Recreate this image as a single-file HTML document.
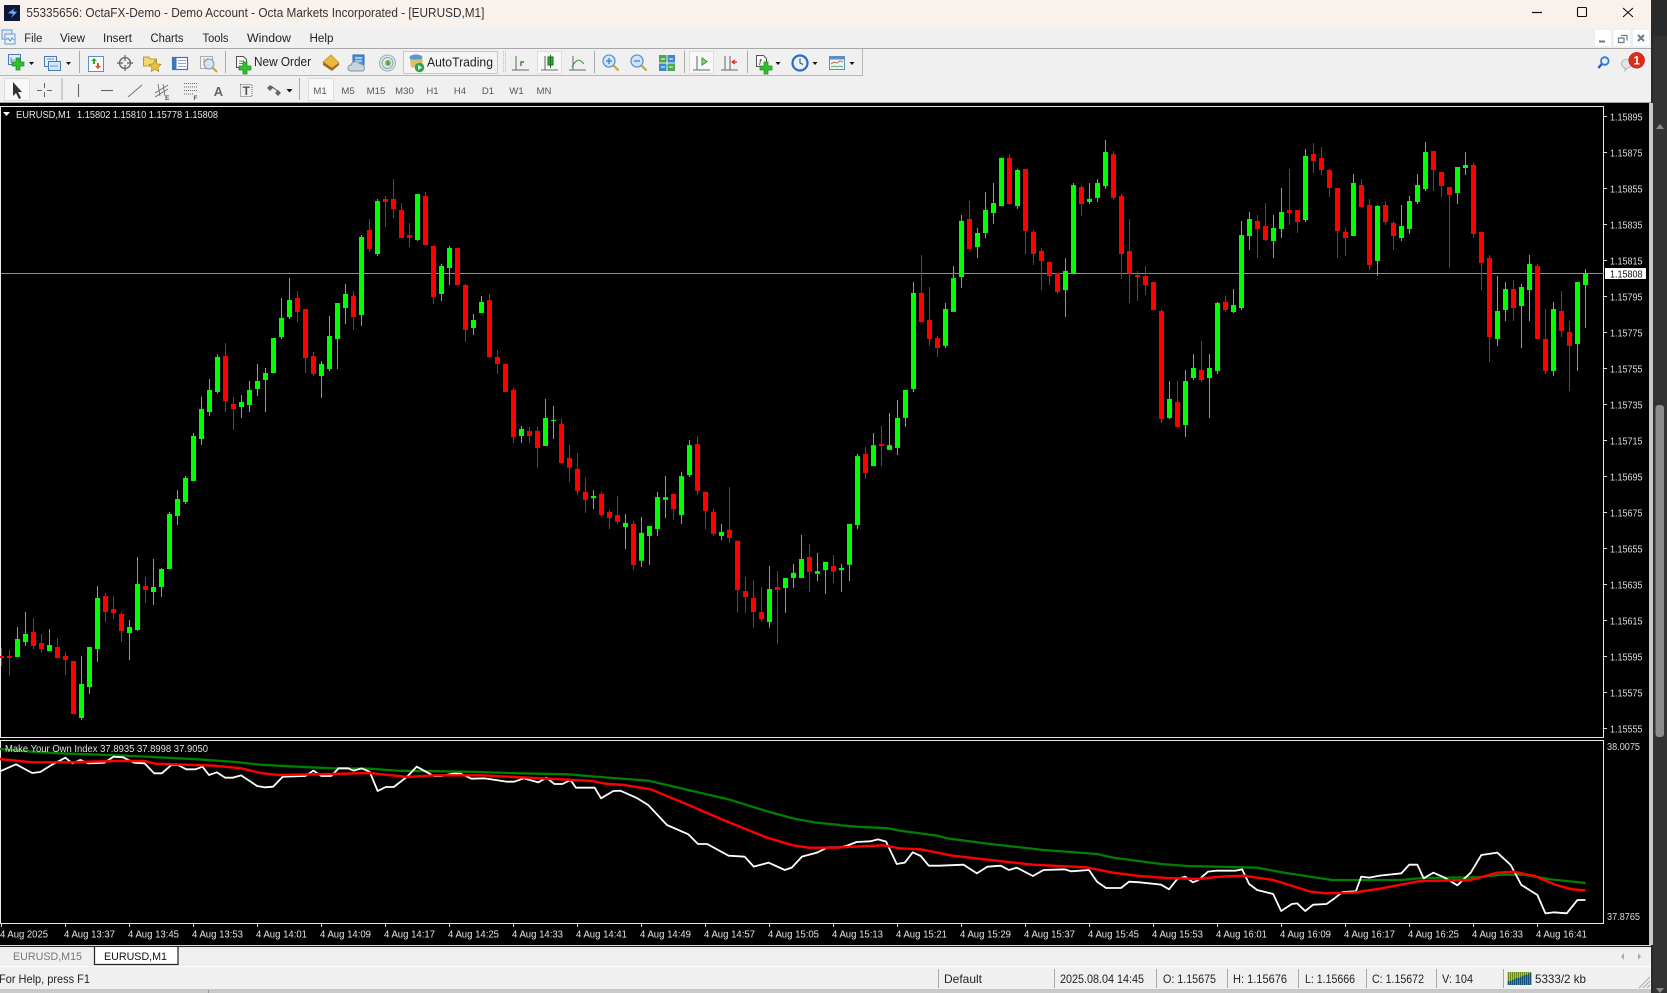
<!DOCTYPE html>
<html><head><meta charset="utf-8"><title>55335656: OctaFX-Demo - Demo Account - Octa Markets Incorporated - [EURUSD,M1]</title>
<style>
html,body{margin:0;padding:0;background:#2a2a2a;width:1667px;height:993px;overflow:hidden}
svg{display:block;font-family:"Liberation Sans",sans-serif}
.m{font-size:12.2px;fill:#222}
.tf{font-size:9.6px;fill:#555;text-anchor:middle}
.p{font-size:10px;fill:#dcdcdc}
.t{font-size:10.4px;fill:#e4e4e4}
.s{font-size:11.7px;fill:#222}
.c{fill:none;shape-rendering:crispEdges}
.r{stroke:#f00}.g{stroke:#0f0}
.w{stroke-width:.125}.b{stroke-width:.625}
.i{fill:none;vector-effect:non-scaling-stroke;stroke-linejoin:round}
.ic{fill:none;stroke:#555;stroke-width:1}
.sep{stroke:#a8a8a8;stroke-width:1;shape-rendering:crispEdges}
</style></head><body>
<svg width="1667" height="993" viewBox="0 0 1667 993" xmlns="http://www.w3.org/2000/svg">
<!-- background panels -->
<rect width="1667" height="993" fill="#2a2a2a"/>
<rect x="1653" y="36" width="14" height="957" fill="#333"/>
<rect x="0" y="0" width="1651" height="28" fill="#f8f1ec"/>
<rect x="0" y="28" width="1651" height="75" fill="#f0f0f0"/>
<rect x="0" y="48" width="1651" height="1" fill="#a8a8a8"/>
<rect x="0" y="75" width="862" height="1" fill="#b8b8b8"/>
<rect x="862" y="49" width="1" height="27" fill="#b8b8b8"/>
<rect x="0" y="102" width="1651" height="1" fill="#a0a0a0"/>
<rect x="0" y="103" width="1650" height="842" fill="#000"/>
<rect x="1649" y="103" width="4" height="842" fill="#c8c8c8"/>
<!-- title bar -->
<rect x="4" y="5" width="16" height="16" fill="#10183a"/>
<path d="M15 8L8 13l5 1-2 4 6-6-4-1z" fill="#6ea8f0"/>
<text x="26.4" y="17" font-size="13.2" fill="#333" textLength="458" lengthAdjust="spacingAndGlyphs">55335656: OctaFX-Demo - Demo Account - Octa Markets Incorporated - [EURUSD,M1]</text>
<path d="M1532 12.5h10" stroke="#111" stroke-width="1.2"/>
<rect x="1577.5" y="7.5" width="9" height="9" rx="1" fill="none" stroke="#111" stroke-width="1.1"/>
<path d="M1623 8l10 9M1633 8l-10 9" stroke="#111" stroke-width="1.1"/>
<!-- menu -->
<rect x="2" y="30" width="10" height="9" fill="#dbe8f8" stroke="#6a9ad0"/>
<rect x="5" y="34" width="10" height="10" fill="#e8f1fb" stroke="#6a9ad0"/>
<path d="M6 40l2-2 2 3 2-3 2 2" fill="none" stroke="#4a7ab0" stroke-width=".8"/>
<text class="m" x="24.3" y="42" textLength="18" lengthAdjust="spacingAndGlyphs">File</text>
<text class="m" x="60" y="42" textLength="25" lengthAdjust="spacingAndGlyphs">View</text>
<text class="m" x="103" y="42" textLength="29" lengthAdjust="spacingAndGlyphs">Insert</text>
<text class="m" x="150.5" y="42" textLength="33" lengthAdjust="spacingAndGlyphs">Charts</text>
<text class="m" x="202.5" y="42" textLength="26" lengthAdjust="spacingAndGlyphs">Tools</text>
<text class="m" x="247" y="42" textLength="44" lengthAdjust="spacingAndGlyphs">Window</text>
<text class="m" x="309.5" y="42" textLength="24" lengthAdjust="spacingAndGlyphs">Help</text>
<rect x="1595" y="30" width="16" height="16" fill="#fff"/><rect x="1614" y="30" width="16" height="16" fill="#fff"/><rect x="1633" y="30" width="16" height="16" fill="#fff"/>
<path d="M1599 41.5h6" stroke="#6a7a8a" stroke-width="2"/>
<path d="M1621 35.5h6v5M1618.5 38h5.500v4.500h-5.500z" fill="none" stroke="#6a7a8a" stroke-width="1.200"/>
<path d="M1638 35l6 6M1644 35l-6 6" stroke="#6a7a8a" stroke-width="2"/>
<!-- toolbar 1 -->
<g>
<rect x="8.500" y="54.500" width="12" height="10" fill="#e4eef9" stroke="#4a7ab8"/>
<path d="M11 57v5h6M11 60h4" stroke="#4a7ab8" fill="none" stroke-width=".8"/>
<path d="M16 58h4v4h4v4h-4v4h-4v-4h-4v-4h4z" fill="#30c030" stroke="#1c8a1c" stroke-width=".7"/>
<path d="M29 62h5l-2.500 3z" fill="#111"/>
<rect x="44.500" y="56.500" width="12" height="10" fill="#e4eef9" stroke="#4a7ab8"/>
<rect x="48.500" y="61.500" width="12" height="9" fill="#d6e6f7" stroke="#4a7ab8"/>
<path d="M47 59h7M50 66h8" stroke="#4a7ab8" stroke-width=".8"/>
<path d="M66 62h5l-2.500 3z" fill="#111"/>
<path class="sep" d="M79.500 51v22"/>
<rect x="88.500" y="56.500" width="15" height="15" fill="#fdfdfd" stroke="#5a90c8"/>
<path d="M94 58l3 3h-2v3h-2v-3h-2z" fill="#2ca82c"/><path d="M98 69l-3-3h2v-3h2v3h2z" fill="#e05030"/>
<circle cx="125" cy="63" r="5.500" fill="#e8e8e8" stroke="#666" stroke-width="1.300"/>
<path d="M125 55v16M117 63h16" stroke="#666" stroke-width="1.200"/><circle cx="125" cy="63" r="2" fill="#f0f0f0"/>
<path d="M143.500 66v-9h5l2 2h6v7z" fill="#f6d870" stroke="#b89838"/>
<path d="M155 60l1.900 3.900 4.100.500-3 3 .8 4.100-3.800-2.100-3.800 2.100.800-4.100-3-3 4.100-.500z" fill="#eec040" stroke="#a88828" stroke-width=".7"/>
<rect x="172.500" y="57.500" width="15" height="12" fill="#fff" stroke="#3a78b8" stroke-width="1.200"/>
<rect x="172.500" y="57.500" width="4" height="12" fill="#3a78b8"/>
<path d="M178 60.500h8M178 63.500h8M178 66.500h8" stroke="#6a8ab0" stroke-width=".8"/>
<rect x="200.500" y="56.500" width="12" height="12" fill="#f4f4f4" stroke="#aaa"/>
<path d="M204 58v7h7M207 58v4" stroke="#888" fill="none" stroke-width=".8"/>
<circle cx="209" cy="64" r="5" fill="#cfe4f6" fill-opacity=".8" stroke="#8898a8"/>
<path d="M213 68l4 4" stroke="#c8a040" stroke-width="2"/>
<path class="sep" d="M225.500 51v22"/>
<path d="M236.500 56.500h7l3 3v8h-10z" fill="#f8f8f8" stroke="#555"/><path d="M239 61h5M239 63.500h5" stroke="#555" stroke-width=".8"/>
<path d="M243 62h4v4h4v4h-4v4h-4v-4h-4v-4h4z" fill="#30c030" stroke="#1c8a1c" stroke-width=".7"/>
<text x="254" y="66" font-size="12.600" fill="#222" textLength="57" lengthAdjust="spacingAndGlyphs">New Order</text>
<path d="M323 62l8-7 8 8-7 5z" fill="#eab93a" stroke="#b88a20" stroke-width=".7"/><path d="M323 62l9 6 7-5v2l-7 6-9-6z" fill="#9a6a28"/>
<path d="M353 55h11v10h-11z" fill="#4a90d8" stroke="#2a68b0"/><path d="M355 58h7M355 61h7" stroke="#fff"/>
<path d="M351 71a3 3 0 010-6 5 5 0 019-1 4 4 0 013 7z" fill="#c8d4e2" stroke="#8494a8"/>
<circle cx="387.500" cy="63" r="8" fill="#dfe8ee" stroke="#9ab0b8"/><circle cx="387.500" cy="63" r="5.500" fill="none" stroke="#8aa8b0"/><circle cx="388" cy="63" r="3" fill="#8ab860"/><path d="M388 61v4" stroke="#2a7a30"/>
<rect x="403.500" y="51.500" width="94" height="22" fill="#f4f4f4" stroke="#c8c8c8"/>
<ellipse cx="416" cy="57.500" rx="6.500" ry="3" fill="#5a98d0"/><path d="M410 59.500h13l-1 8h-11z" fill="#d8c070"/><circle cx="419.500" cy="67.500" r="4.700" fill="#27a84a"/><path d="M418 65v5l4-2.500z" fill="#fff"/>
<text x="427" y="66.300" font-size="12.600" fill="#222" textLength="66" lengthAdjust="spacingAndGlyphs">AutoTrading</text>
<path d="M503.500 51v22" stroke="#bbb" stroke-dasharray="1 1"/><path d="M505.500 51v22" stroke="#bbb" stroke-dasharray="1 1"/>
<path d="M516 56v14M512 70h17" stroke="#666" fill="none"/><path d="M521 66v-4h3" stroke="#2a8a2a" fill="none" stroke-width="1.400"/>
<rect x="537.500" y="51.500" width="24" height="22" fill="#f8f8f8" stroke="#ddd"/>
<path d="M545 56v14M541 70h17" stroke="#666" fill="none"/><rect x="548" y="57" width="5" height="8" fill="#2ab52a" stroke="#176e17"/><path d="M550.500 55v13" stroke="#176e17"/>
<path d="M573 56v14M569 70h17" stroke="#666" fill="none"/><path d="M572 67c3-6 6-8 9-6l3 3" stroke="#3a9a3a" fill="none" stroke-width="1.100"/>
<path class="sep" d="M594.500 51v22"/>
<circle cx="609" cy="61" r="6" fill="#cfe4f8" stroke="#5a98d0" stroke-width="1.300"/><path d="M606 61h6M609 58v6" stroke="#3a78c0" stroke-width="1.200"/><path d="M613.500 65.500l5 5" stroke="#d0a840" stroke-width="2.400"/>
<circle cx="637" cy="61" r="6" fill="#cfe4f8" stroke="#5a98d0" stroke-width="1.300"/><path d="M634 61h6" stroke="#3a78c0" stroke-width="1.200"/><path d="M641.500 65.500l5 5" stroke="#d0a840" stroke-width="2.400"/>
<rect x="659" y="55" width="7.500" height="7.500" fill="#4ca84c"/><rect x="667.500" y="55" width="7.500" height="7.500" fill="#3a88d8"/><rect x="659" y="63.500" width="7.500" height="7.500" fill="#3a88d8"/><rect x="667.500" y="63.500" width="7.500" height="7.500" fill="#4ca84c"/>
<path d="M661 59h4M669 59h4M661 67h4M669 67h4" stroke="#fff"/>
<path class="sep" d="M684.500 51v22"/>
<rect x="689.500" y="51.500" width="24" height="22" fill="#f8f8f8" stroke="#ddd"/>
<path d="M697 56v14M693 70h17" stroke="#666" fill="none"/><path d="M702 58v7l5-3.500z" fill="#8ed88e" stroke="#2a9a2a"/>
<path d="M725 56v14M721 70h17M730 56v14" stroke="#666" fill="none"/><path d="M737 62h-4m2-2l-3 2 3 2" stroke="#d83020" fill="none" stroke-width="1.200"/>
<path class="sep" d="M747.500 51v22"/>
<path d="M756.500 55.500h7l3 3v8h-10z" fill="#f8f8f8" stroke="#555"/><text x="759" y="65" font-size="8" fill="#333" font-style="italic">f</text>
<path d="M764 62h4v4h4v4h-4v4h-4v-4h-4v-4h4z" fill="#30c030" stroke="#1c8a1c" stroke-width=".7"/>
<path d="M775.500 62h5l-2.500 3z" fill="#111"/>
<circle cx="800" cy="63" r="7.500" fill="#e8f0f8" stroke="#2a6fc0" stroke-width="2.200"/><path d="M800 58.500v4.500l3 1.500" stroke="#444" fill="none"/>
<path d="M812.500 62h5l-2.500 3z" fill="#111"/>
<rect x="829.500" y="56.500" width="15" height="13" fill="#eef4fb" stroke="#5a90c8"/><rect x="829.500" y="56.500" width="15" height="3" fill="#5a90c8"/><path d="M831 64l3-2 3 1 3-2 3 1" stroke="#d05030" fill="none" stroke-width=".8"/><path d="M831 67l3-1 3 1 3-1 3 1" stroke="#3a9a3a" fill="none" stroke-width=".8"/>
<path d="M849.500 62h5l-2.500 3z" fill="#111"/>
<!-- search + chat -->
<circle cx="1604.800" cy="61" r="3.800" fill="#e8f2fc" stroke="#3a78d0" stroke-width="1.800"/><path d="M1601.800 64l-3.500 4" stroke="#2a60c0" stroke-width="2.400"/>
<path d="M1624 60a5 5 0 015 0c4 1 3 8-2 8l-2 3v-3c-4-1-5-6-1-8z" fill="#e4e4e4" stroke="#b8b8b8"/>
<circle cx="1636.700" cy="60.300" r="8" fill="#e02a1a"/><circle cx="1636.700" cy="60.300" r="8" fill="none" stroke="#b82010" stroke-width=".5"/>
<text x="1636.700" y="64.500" font-size="11.500" font-weight="bold" fill="#fff" text-anchor="middle">1</text>
</g>
<!-- toolbar 2 -->
<g>
<rect x="4.500" y="78.500" width="25" height="22" fill="#f8f8f8" stroke="#ddd"/>
<path d="M13 82v14l3-3 3 6 2-1-3-6h4z" fill="#333"/>
<path d="M44.500 83v5M44.500 92v5M37 90.500h5M47 90.500h5" stroke="#666"/>
<path class="sep" d="M62 78v22"/>
<path d="M78.500 84v13" stroke="#666" stroke-width="1.100"/>
<path d="M101 90.500h12" stroke="#666" stroke-width="1.100"/>
<path d="M128 97l14-12" stroke="#777" stroke-width="1.100"/>
<path d="M155 93l13-8M155 97l13-8M158 84l2 12M163 84l2 12" stroke="#666" fill="none" stroke-width=".8"/>
<text x="165" y="100" font-size="6.500" font-weight="bold" fill="#555">E</text>
<path d="M184 83.500h13M184 87h13M184 90.500h13M184 94h9" stroke="#666" stroke-dasharray="1 1"/>
<text x="193.500" y="100" font-size="6.500" font-weight="bold" fill="#555">F</text>
<text x="218.500" y="96" font-size="13" font-weight="bold" fill="#666" text-anchor="middle">A</text>
<rect x="240.500" y="84.500" width="11.500" height="12" fill="none" stroke="#666" stroke-dasharray="1 1"/>
<text x="246.300" y="95" font-size="12" font-weight="bold" fill="#555" text-anchor="middle">T</text>
<path d="M270 85l3 3-3 3-3-3z" fill="#666"/><path d="M278 90l3 3-3 3-3-3z" fill="#666"/><path d="M271 86l8 6" stroke="#555"/>
<path d="M286.500 89h6l-3 3.500z" fill="#111"/>
<path class="sep" d="M299.500 78v22"/>
<rect x="308.500" y="78.500" width="25" height="22" fill="#f8f8f8" stroke="#ddd"/>
<text class="tf" x="320" y="94">M1</text><text class="tf" x="348" y="94">M5</text><text class="tf" x="376" y="94">M15</text><text class="tf" x="404.500" y="94">M30</text><text class="tf" x="432.500" y="94">H1</text><text class="tf" x="460" y="94">H4</text><text class="tf" x="488" y="94">D1</text><text class="tf" x="516.500" y="94">W1</text><text class="tf" x="544" y="94">MN</text>
</g>

<!-- chart frames -->
<g fill="#e8e8e8" shape-rendering="crispEdges">
<rect x="0" y="106" width="1604" height="1"/>
<rect x="0" y="106" width="1" height="632"/>
<rect x="1603" y="106" width="1" height="632"/>
<rect x="0" y="737" width="1604" height="1"/>
<rect x="0" y="740" width="1604" height="1"/>
<rect x="0" y="740" width="1" height="184"/>
<rect x="1603" y="740" width="1" height="184"/>
<rect x="0" y="923" width="1604" height="1"/>
</g>
<!-- price line -->
<rect x="1" y="273" width="1603" height="1" fill="#8a9096"/>

<!-- candles group A -->
<g transform="translate(1.5,400) scale(8,.33333)">
<path class="c r w" d="M0 744V798M1 750V828M4 654V747M5 702V759M7 714V774M8 756V825M13 579V666M14 588V657M15 636V726M18 531V609M28-171V36M29-9V90M37-327V-234M38-273V-81M39-144V-72M44-327V-210M46-543V-444M48-612V-519M49-663V-546M50-591V-486M51-531V-459M53-624V-465M54-462V-288M58-348V-174M61-318V-126M62-150V-78M63-111V-24M64-36V129M66 81V129M67 81V204"/>
<path class="c r b" d="M0 768V774M1 768V774M4 696V738M5 729V747M7 741V774M8 768V780M9 783V942M13 588V636M14 627V639M15 642V693M18 558V570M28-132V4M29 12V27M37-306V-264M38-273V-126M39-132V-78M44-312V-249M46-510V-453M48-603V-594M49-603V-573M50-570V-486M51-495V-486M53-612V-465M54-462V-309M57-456V-345M58-345V-210M61-300V-129M62-129V-108M63-108V-24M64-30V111M66 93V108M67 93V144"/>
<path class="c g w" d="M2 681V771M3 636V738M6 687V753M10 768V960M11 741V882M12 558V786M16 660V780M17 471V693M19 477V615M20 504V591M21 336V507M22 270V375M23 228V312M24 99V243M25-10V135M26-63V48M27-137V-20M30-15V54M31-57V36M32-108V-12M33-96V36M35-306V-183M36-366V-243M40-117V-6M41-252V-87M42-291V-93M43-348V-228M45-495V-222M47-603V-432M52-618V-477M55-408V-297M56-462V-345M59-258V-195M60-312V-261M65 78V129M68-3V138M69 18V117"/>
<path class="c g b" d="M2 717V771M3 702V726M6 735V753M10 852V954M11 741V861M12 594V747M16 681V699M17 552V690M19 561V576M20 507V561M21 342V507M22 297V348M23 234V306M24 108V243M25 27V117M26-30V36M27-129V-24M30 6V21M31-30V15M32-57V-33M33-81V-60M34-186V-81M35-246V-189M36-300V-249M40-108V-72M41-192V-93M42-291V-183M43-318V-276M45-489V-255M47-597V-438M52-618V-480M55-402V-318M56-456V-396M59-240V-216M60-294V-261M65 87V108M68 54V138M69 60V63"/>
</g>
<!-- candles group B -->
<g transform="translate(1.5,130) scale(8,.34435)">
<path class="c r w" d="M70 837V967M71 915V1022M72 938V1060M73 1010V1112M75 1051V1121M76 1103V1159M77 1063V1144M79 1135V1278M84 1057V1132M87 889V1060M88 1051V1159M89 1098V1179M91 1037V1199M92 1193V1402M93 1298V1402M94 1307V1445M95 1327V1428M97 1281V1493M101 1202V1342M104 1234V1315M108 921V1013M110 859V976M115 363V558M116 456V627M117 598V659M121 206V346M126 70V215M128 113V360M129 290V392M130 343V465M131 383V450M132 415V476M135 160V250M139 61V203"/>
<path class="c r b" d="M70 854V967M71 952V981M72 984V1048M73 1051V1074M75 1057V1118M76 1109V1127M77 1118V1138M79 1144V1263M84 1057V1101M87 912V1048M88 1051V1106M89 1109V1173M91 1161V1185M92 1193V1336M93 1339V1356M94 1359V1400M95 1400V1420M97 1327V1336M101 1240V1283M104 1266V1283M108 941V996M110 912V918M115 473V558M116 552V607M117 604V633M121 258V346M126 81V215M128 113V293M129 296V360M130 351V380M131 383V424M132 415V470M135 166V215M139 70V197"/>
<path class="c g w" d="M74 1045V1101M78 1115V1217M80 1124V1269M81 1150V1263M82 1051V1179M83 1005V1127M85 993V1144M86 900V1008M90 1144V1191M96 1266V1445M98 1301V1402M99 1260V1330M100 1176V1301M102 1228V1310M103 1254V1347M105 1260V1342M106 1144V1310M107 941V1159M109 880V976M111 822V929M112 784V944M113 755V862M114 441V761M118 502V633M119 395V528M120 247V459M122 285V372M123 180V314M124 154V273M125 81V221M127 113V229M133 372V543M134 154V417M136 154V215M137 142V209M138 29V171"/>
<path class="c g b" d="M74 1063V1069M78 1141V1153M80 1170V1251M81 1150V1179M82 1066V1159M83 1066V1074M85 1005V1118M86 915V1002M90 1167V1179M96 1333V1429M98 1301V1330M99 1286V1301M100 1246V1301M102 1281V1289M103 1254V1278M105 1272V1278M106 1144V1263M107 947V1147M109 915V976M111 915V929M112 836V923M113 755V836M114 473V752M118 520V627M119 430V528M120 264V427M122 299V340M123 232V299M124 212V241M125 81V221M127 116V221M133 409V465M134 160V417M136 200V209M137 154V197M138 64V163"/>
</g>
<!-- candles group C -->
<g transform="translate(1.5,130) scale(8,.33333)">
<path class="c r w" d="M140 192V447M141 267V519M142 423V513M143 408V495M144 456V540M145 537V879M147 753V891M150 633V756M153 498V546M157 255V384M158 219V333M161 117V285M162 240V309M164 39V129M165 51V135M166 117V201M167 174V384M168 294V378M170 147V231M171 207V420M173 213V285M174 273V360M179 63V183M180 126V201M181 171V414M184 99V324M185 306V480M186 375V696M189 450V573M192 402V627M193 537V732M195 483V621M196 573V783"/>
<path class="c r b" d="M140 198V372M141 363V431M142 435V441M143 438V465M144 456V540M145 543V867M147 816V891M150 720V750M153 516V540M157 273V297M158 288V330M161 240V249M162 240V276M164 72V93M165 84V120M166 120V174M167 174V303M168 306V324M170 165V231M171 225V405M173 225V276M174 279V318M179 63V120M180 126V168M181 171V195M184 105V312M185 306V399M186 384V621M189 477V534M192 408V627M193 627V723M195 543V603M196 606V648"/>
<path class="c g w" d="M146 753V867M148 720V921M149 672V750M151 672V864M152 516V732M154 477V549M155 273V540M156 246V360M159 255V384M160 174V324M163 57V276M169 132V318M172 225V438M175 225V333M176 198V312M177 132V222M178 36V183M182 111V222M183 66V135M187 438V648M188 456V573M190 462V654M191 375V573M194 516V738M197 456V723M198 417V594"/>
<path class="c g b" d="M146 807V864M148 753V885M149 714V744M151 714V744M152 519V723M154 525V546M155 315V534M156 267V318M159 294V333M160 246V297M163 78V270M169 159V318M172 228V393M175 288V324M176 213V297M177 165V216M178 66V177M182 111V189M183 105V114M187 543V627M188 477V540M190 471V528M191 402V480M194 537V723M197 456V642M198 430V465"/>
</g>

<!-- indicator -->
<g transform="translate(0,730) scale(.5357,.33333)">
<polyline class="i" stroke="#007f00" stroke-width="2.300" points="0,57 60,65 110,70 165,73 250,78 310,83 370,88 440,96 485,104 540,109 620,115 690,116 740,122 870,125 970,130 1060,133 1120,141 1210,152 1280,178 1360,208 1430,243 1480,265 1520,277 1568,285"/>
<polyline class="i" stroke="#fff" stroke-width="1.800" points="0,124 30,103 60,129 75,126 95,106 122,83 135,100 150,90 165,100 195,98 212,80 230,82 250,98 270,100 288,130 302,130 320,105 332,105 348,118 365,118 378,110 390,135 405,127 420,143 435,143 450,136 480,168 495,172 510,170 528,140 570,138 585,122 600,138 618,138 632,115 650,115 660,122 675,115 690,125 705,183 720,171 735,171 760,140 778,110 795,125 810,138 825,138 845,131 860,131 880,146 905,145 945,155 960,155 978,145 1005,157 1020,143 1035,162 1050,162 1065,150 1075,173 1110,173 1122,205 1145,183 1158,182 1190,205 1210,225 1245,285 1285,313 1303,342 1320,342 1360,377 1390,380 1407,410 1435,398 1465,420 1478,413 1497,380 1525,368 1545,352 1568,352"/>
<polyline class="i" stroke="#f00" stroke-width="2.400" points="0,87 60,97 130,97 210,93 270,93 290,101 400,107 450,115 490,130 520,135 640,131 690,129 760,141 810,136 900,136 960,141 1060,149 1105,153 1130,161 1165,165 1215,178 1290,228 1350,270 1430,322 1480,346 1510,353 1568,353"/>
</g>
<g transform="translate(840,730) translate(-10,0) scale(.5339,.33333)">
<polyline class="i" stroke="#007f00" stroke-width="2.300" points="19,286 50,290 110,295 130,302 200,317 220,325 300,342 400,360 500,372 530,383 620,402 670,408 800,413 850,428 940,450 1070,450 1110,444 1210,442 1260,434 1300,434 1350,448 1415,459"/>
<polyline class="i" stroke="#fff" stroke-width="1.800" points="19,352 30,348 50,336 75,334 90,328 105,335 125,402 140,398 155,367 170,378 185,407 205,407 250,404 275,430 295,410 320,407 335,420 350,413 380,438 400,420 440,418 452,424 485,420 500,455 517,474 545,474 560,455 580,457 620,464 635,478 650,448 665,440 680,457 690,450 708,425 725,422 760,422 772,418 785,462 800,480 830,492 845,543 865,522 875,520 890,543 905,524 930,522 945,505 960,486 985,484 995,440 1010,443 1030,437 1070,430 1085,404 1100,404 1112,445 1130,428 1150,442 1175,466 1200,428 1220,375 1250,368 1275,405 1295,465 1325,495 1340,550 1355,547 1380,550 1400,510 1415,510"/>
<polyline class="i" stroke="#f00" stroke-width="2.400" points="19,352 100,346 130,355 170,358 230,377 300,390 380,404 480,412 530,428 580,438 630,444 690,447 730,440 775,437 830,450 900,485 930,490 980,488 1030,476 1105,453 1200,450 1250,428 1280,425 1320,438 1360,465 1390,478 1415,481"/>
</g>

<!-- chart labels -->
<path d="M3 112h7l-3.500 4z" fill="#fff"/>
<text x="16" y="118" font-size="10.400" fill="#e8e8e8" textLength="55" lengthAdjust="spacingAndGlyphs">EURUSD,M1</text>
<text x="77" y="118" font-size="10.400" fill="#e8e8e8" textLength="141" lengthAdjust="spacingAndGlyphs">1.15802 1.15810 1.15778 1.15808</text>
<text x="5" y="752" font-size="10.400" fill="#e0e0e0" textLength="203" lengthAdjust="spacingAndGlyphs">Make Your Own Index 37.8935 37.8998 37.9050</text>

<!-- price axis -->
<g stroke="#ddd" shape-rendering="crispEdges"><path d="M1604 116.500h3M1604 152.500h3M1604 188.500h3M1604 224.500h3M1604 260.500h3M1604 296.500h3M1604 332.500h3M1604 368.500h3M1604 404.500h3M1604 440.500h3M1604 476.500h3M1604 512.500h3M1604 548.500h3M1604 584.500h3M1604 620.500h3M1604 656.500h3M1604 692.500h3M1604 728.500h3"/></g>
<g lengthAdjust="spacingAndGlyphs">
<text class="p" x="1610" y="120.300" textLength="32.500" lengthAdjust="spacingAndGlyphs">1.15895</text><text class="p" x="1610" y="156.300" textLength="32.500" lengthAdjust="spacingAndGlyphs">1.15875</text><text class="p" x="1610" y="192.300" textLength="32.500" lengthAdjust="spacingAndGlyphs">1.15855</text><text class="p" x="1610" y="228.300" textLength="32.500" lengthAdjust="spacingAndGlyphs">1.15835</text><text class="p" x="1610" y="264.300" textLength="32.500" lengthAdjust="spacingAndGlyphs">1.15815</text><text class="p" x="1610" y="300.300" textLength="32.500" lengthAdjust="spacingAndGlyphs">1.15795</text><text class="p" x="1610" y="336.300" textLength="32.500" lengthAdjust="spacingAndGlyphs">1.15775</text><text class="p" x="1610" y="372.300" textLength="32.500" lengthAdjust="spacingAndGlyphs">1.15755</text><text class="p" x="1610" y="408.300" textLength="32.500" lengthAdjust="spacingAndGlyphs">1.15735</text><text class="p" x="1610" y="444.300" textLength="32.500" lengthAdjust="spacingAndGlyphs">1.15715</text><text class="p" x="1610" y="480.300" textLength="32.500" lengthAdjust="spacingAndGlyphs">1.15695</text><text class="p" x="1610" y="516.300" textLength="32.500" lengthAdjust="spacingAndGlyphs">1.15675</text><text class="p" x="1610" y="552.300" textLength="32.500" lengthAdjust="spacingAndGlyphs">1.15655</text><text class="p" x="1610" y="588.300" textLength="32.500" lengthAdjust="spacingAndGlyphs">1.15635</text><text class="p" x="1610" y="624.300" textLength="32.500" lengthAdjust="spacingAndGlyphs">1.15615</text><text class="p" x="1610" y="660.300" textLength="32.500" lengthAdjust="spacingAndGlyphs">1.15595</text><text class="p" x="1610" y="696.300" textLength="32.500" lengthAdjust="spacingAndGlyphs">1.15575</text><text class="p" x="1610" y="732.300" textLength="32.500" lengthAdjust="spacingAndGlyphs">1.15555</text>
</g>
<rect x="1605" y="268" width="41" height="11" fill="#fff"/>
<text x="1610" y="277.300" font-size="10" fill="#111" textLength="32.500" lengthAdjust="spacingAndGlyphs">1.15808</text>
<text class="p" x="1607" y="750" textLength="33" lengthAdjust="spacingAndGlyphs">38.0075</text>
<text class="p" x="1607" y="920" textLength="33" lengthAdjust="spacingAndGlyphs">37.8765</text>

<!-- time axis -->
<path d="M1.500 923v4M65.500 923v4M129.500 923v4M193.500 923v4M257.500 923v4M321.500 923v4M385.500 923v4M449.500 923v4M513.500 923v4M577.500 923v4M641.500 923v4M705.500 923v4M769.500 923v4M833.500 923v4M897.500 923v4M961.500 923v4M1025.500 923v4M1089.500 923v4M1153.500 923v4M1217.500 923v4M1281.500 923v4M1345.500 923v4M1409.500 923v4M1473.500 923v4M1537.500 923v4" stroke="#ddd" shape-rendering="crispEdges"/>
<text class="t" x="0" y="937.500" textLength="48" lengthAdjust="spacingAndGlyphs">4 Aug 2025</text><text class="t" x="64" y="937.500" textLength="51" lengthAdjust="spacingAndGlyphs">4 Aug 13:37</text><text class="t" x="128" y="937.500" textLength="51" lengthAdjust="spacingAndGlyphs">4 Aug 13:45</text><text class="t" x="192" y="937.500" textLength="51" lengthAdjust="spacingAndGlyphs">4 Aug 13:53</text><text class="t" x="256" y="937.500" textLength="51" lengthAdjust="spacingAndGlyphs">4 Aug 14:01</text><text class="t" x="320" y="937.500" textLength="51" lengthAdjust="spacingAndGlyphs">4 Aug 14:09</text><text class="t" x="384" y="937.500" textLength="51" lengthAdjust="spacingAndGlyphs">4 Aug 14:17</text><text class="t" x="448" y="937.500" textLength="51" lengthAdjust="spacingAndGlyphs">4 Aug 14:25</text><text class="t" x="512" y="937.500" textLength="51" lengthAdjust="spacingAndGlyphs">4 Aug 14:33</text><text class="t" x="576" y="937.500" textLength="51" lengthAdjust="spacingAndGlyphs">4 Aug 14:41</text><text class="t" x="640" y="937.500" textLength="51" lengthAdjust="spacingAndGlyphs">4 Aug 14:49</text><text class="t" x="704" y="937.500" textLength="51" lengthAdjust="spacingAndGlyphs">4 Aug 14:57</text><text class="t" x="768" y="937.500" textLength="51" lengthAdjust="spacingAndGlyphs">4 Aug 15:05</text><text class="t" x="832" y="937.500" textLength="51" lengthAdjust="spacingAndGlyphs">4 Aug 15:13</text><text class="t" x="896" y="937.500" textLength="51" lengthAdjust="spacingAndGlyphs">4 Aug 15:21</text><text class="t" x="960" y="937.500" textLength="51" lengthAdjust="spacingAndGlyphs">4 Aug 15:29</text><text class="t" x="1024" y="937.500" textLength="51" lengthAdjust="spacingAndGlyphs">4 Aug 15:37</text><text class="t" x="1088" y="937.500" textLength="51" lengthAdjust="spacingAndGlyphs">4 Aug 15:45</text><text class="t" x="1152" y="937.500" textLength="51" lengthAdjust="spacingAndGlyphs">4 Aug 15:53</text><text class="t" x="1216" y="937.500" textLength="51" lengthAdjust="spacingAndGlyphs">4 Aug 16:01</text><text class="t" x="1280" y="937.500" textLength="51" lengthAdjust="spacingAndGlyphs">4 Aug 16:09</text><text class="t" x="1344" y="937.500" textLength="51" lengthAdjust="spacingAndGlyphs">4 Aug 16:17</text><text class="t" x="1408" y="937.500" textLength="51" lengthAdjust="spacingAndGlyphs">4 Aug 16:25</text><text class="t" x="1472" y="937.500" textLength="51" lengthAdjust="spacingAndGlyphs">4 Aug 16:33</text><text class="t" x="1536" y="937.500" textLength="51" lengthAdjust="spacingAndGlyphs">4 Aug 16:41</text>

<!-- tabs -->
<rect x="0" y="945" width="1651" height="1" fill="#d8d8d8"/>
<rect x="0" y="946" width="1651" height="21" fill="#f0f0f0"/>
<rect x="0" y="946" width="1651" height="1" fill="#222"/>
<rect x="0" y="966" width="1651" height="1" fill="#fff"/>
<rect x="94" y="947" width="84" height="18" fill="#fff"/>
<path d="M94.500 947v17.500H178V947" fill="none" stroke="#222" stroke-width="1.200"/>
<text x="13" y="960" font-size="11.400" fill="#777" textLength="69" lengthAdjust="spacingAndGlyphs">EURUSD,M15</text>
<text x="104" y="960" font-size="11.400" fill="#111" textLength="63" lengthAdjust="spacingAndGlyphs">EURUSD,M1</text>
<path d="M1624 953l-3 3.500 3 3.500z" fill="#aaa"/><path d="M1638 953l3 3.500-3 3.500z" fill="#aaa"/>

<!-- status bar -->
<rect x="0" y="967" width="1651" height="22" fill="#f0f0f0"/>
<rect x="0" y="989" width="1651" height="4" fill="#c9c9c9"/>
<path d="M208.500 990v3" stroke="#999"/>
<text class="s" x="-1" y="983" textLength="91" lengthAdjust="spacingAndGlyphs">For Help, press F1</text>
<g stroke="#a8a8a8" shape-rendering="crispEdges"><path d="M938.500 969v19M1054.500 969v19M1156.500 969v19M1227.500 969v19M1298.500 969v19M1366.500 969v19M1436.500 969v19M1503.500 969v19"/></g>
<text class="s" x="944" y="983" textLength="38" lengthAdjust="spacingAndGlyphs">Default</text>
<text class="s" x="1060" y="983" textLength="84" lengthAdjust="spacingAndGlyphs">2025.08.04 14:45</text>
<text class="s" x="1163" y="983" textLength="53" lengthAdjust="spacingAndGlyphs">O: 1.15675</text>
<text class="s" x="1233" y="983" textLength="54" lengthAdjust="spacingAndGlyphs">H: 1.15676</text>
<text class="s" x="1305" y="983" textLength="50" lengthAdjust="spacingAndGlyphs">L: 1.15666</text>
<text class="s" x="1372" y="983" textLength="52" lengthAdjust="spacingAndGlyphs">C: 1.15672</text>
<text class="s" x="1442" y="983" textLength="31" lengthAdjust="spacingAndGlyphs">V: 104</text>
<path d="M1508.500 972v13M1510.500 972v13M1512.500 972v13M1514.500 972v13M1516.500 972v13M1518.500 972v13M1520.500 972v13M1522.500 972v13M1524.500 972v13M1526.500 972v13M1528.500 972v13M1530.500 972v13" stroke="#6a8a18" stroke-width="1.500" fill="none"/>
<path d="M1508.500 985v-4M1510.500 985v-4M1512.500 985v-5M1514.500 985v-6M1516.500 985v-7M1518.500 985v-7M1520.500 985v-8M1522.500 985v-9M1524.500 985v-10M1526.500 985v-10M1528.500 985v-11M1530.500 985v-12" stroke="#114e78" stroke-width="1.500" fill="none"/>
<text class="s" x="1535" y="983" textLength="51" lengthAdjust="spacingAndGlyphs">5333/2 kb</text>
<path d="M1639 988l11-11M1643 988l7-7M1647 988l3-3" stroke="#aaa"/>

<!-- scrollbar -->
<rect x="1655.500" y="405" width="8.500" height="332" rx="3" fill="#8c8c8c"/>
<path d="M1656 129l4-5 4 5z" fill="#8a8a8a"/>
<path d="M1656 988l4 5 4-5z" fill="#8a8a8a"/>
</svg>
</body></html>
